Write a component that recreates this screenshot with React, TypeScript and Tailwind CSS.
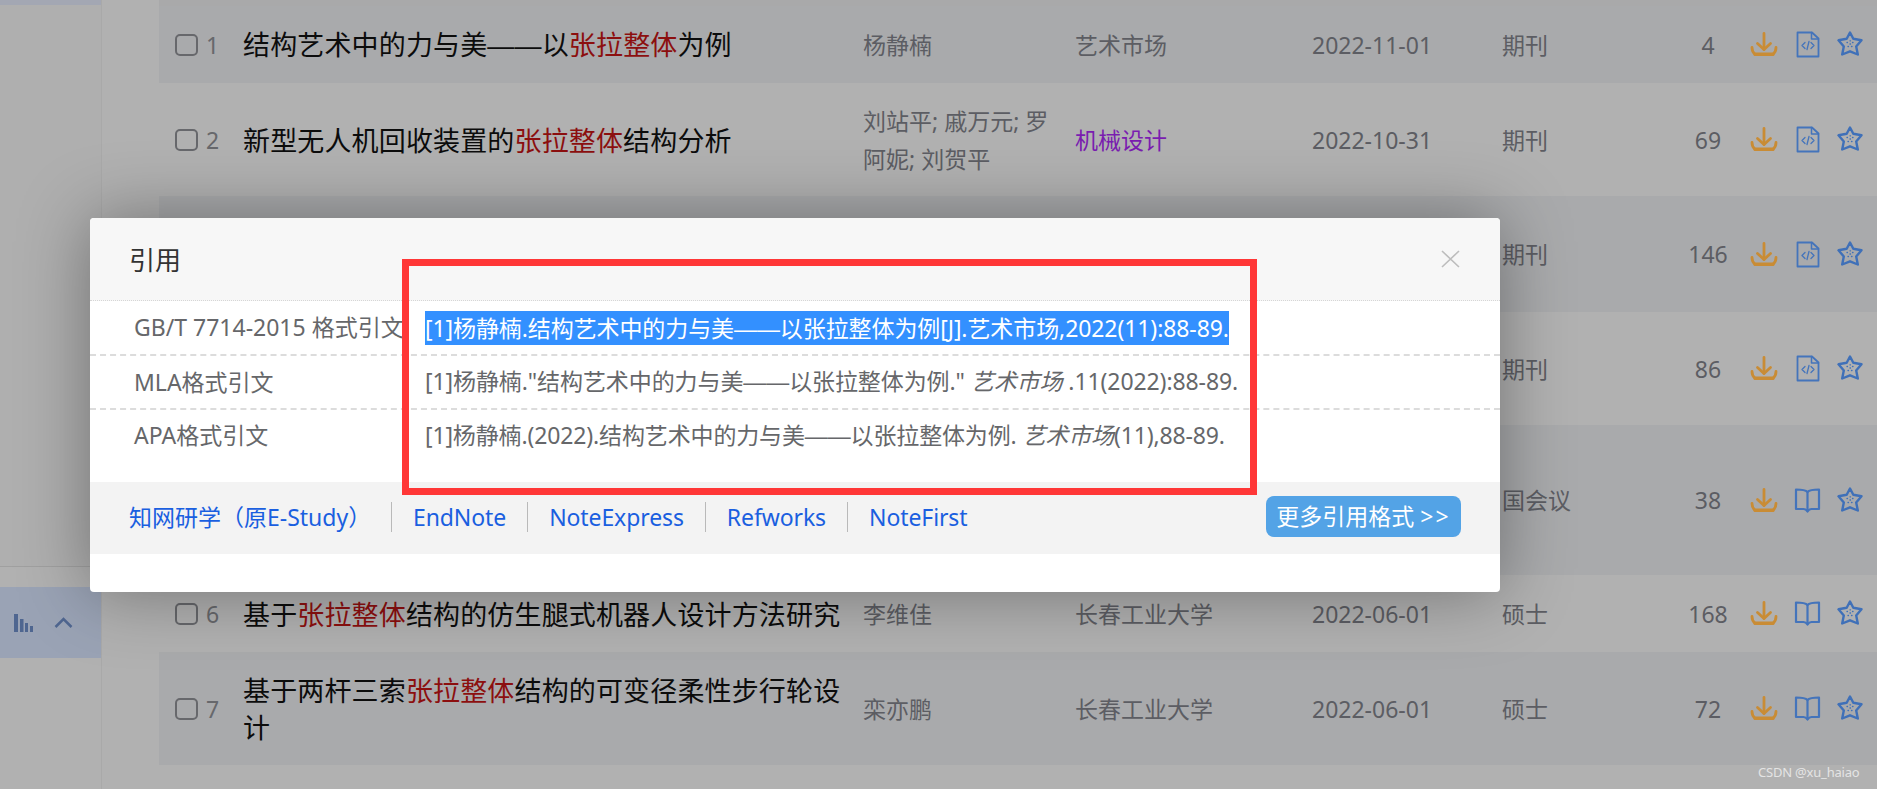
import type { ReactNode } from 'react'

function DownloadIcon() {
  return (
    <svg width="28" height="25" viewBox="0 0 28 25" fill="none" stroke="#c98c35" strokeWidth="2.800" strokeLinecap="round" strokeLinejoin="round">
      <path d="M14 1.500V17.500" />
      <path d="M7.500 11.500 14 17.500l6.500-6" />
      <path d="M2 15.500c0 3 .8 5 3 6.500h18c2.200-1.500 3-3.500 3-6.500" />
      <path d="M5 22.500h18" strokeWidth="3.200" />
    </svg>
  )
}

function DocIcon() {
  return (
    <svg width="24" height="27" viewBox="0 0 24 27" fill="none" stroke="#4474bb" strokeWidth="1.800" strokeLinejoin="round" strokeLinecap="round">
      <path d="M1.500 1.500H16L22.500 7.500V25.500H1.500Z" />
      <path d="M15.500 1.500V8H22.500" strokeWidth="1.500" />
      <path d="M9 11.500 6 14.500l3 3M15 11.500l3 3-3 3M13 10.500l-2 8" strokeWidth="1.300" />
    </svg>
  )
}

function BookIcon() {
  return (
    <svg width="27" height="25" viewBox="0 0 27 25" fill="none" stroke="#4474bb" strokeWidth="2.200" strokeLinejoin="round" strokeLinecap="round" className="-ml-[2px] -mr-[1px]">
      <path d="M13.500 4C11.500 1.800 8 1.500 2 1.500V21H9.500C11 21 12.500 22 13.500 23.500C14.500 22 16 21 17.500 21H25V1.500C19 1.500 15.500 1.800 13.500 4Z" />
      <path d="M13.500 4V23" />
    </svg>
  )
}

function StarIcon() {
  return (
    <svg width="26" height="25" viewBox="0 0 26 25" fill="none" stroke="#3f70b8" strokeWidth="2.400" strokeLinejoin="round" strokeLinecap="round" className="-ml-[1px] -mt-[2px]">
      <path d="M13 1.500 16.300 7.800 24.500 9.300 19.200 15.500 20.800 23.500 13 20.300 5.200 23.500 6.800 15.500 1.500 9.300 9.700 7.800Z" />
      <path d="M10 11.500h.5M15.500 11.500h.5M13 9.800h.5M11 15.500h.5M14.500 15.500h.5M13 13h.5" strokeWidth="1.300" />
    </svg>
  )
}

const Red = ({ children }: { children: ReactNode }) => <span className="text-[#8c0f0f]">{children}</span>
// Liberation's em dash has no side bearing, so the two join into one bar
const Dash = () => <span className="font-['Liberation_Sans',sans-serif]">——</span>

type Row = {
  no?: number
  title?: ReactNode
  authors?: string
  source?: string
  sourceClass?: string
  date?: string
  kind: string
  count: number
  book?: boolean
  height: string
  alt: boolean
}

// rows 3-5 are mostly covered by the dialog, only the right columns show
const rows: Row[] = [
  { no: 1, title: <>结构艺术中的力与美<Dash />以<Red>张拉整体</Red>为例</>, authors: '杨静楠', source: '艺术市场', date: '2022-11-01', kind: '期刊', count: 4, height: 'h-[77px]', alt: true },
  { no: 2, title: <>新型无人机回收装置的<Red>张拉整体</Red>结构分析</>, authors: '刘站平; 戚万元; 罗阿妮; 刘贺平', source: '机械设计', sourceClass: 'text-[#7a1db0]', date: '2022-10-31', kind: '期刊', count: 69, height: 'h-[113px]', alt: false },
  { kind: '期刊', count: 146, height: 'h-[116px]', alt: true },
  { kind: '期刊', count: 86, height: 'h-[113px]', alt: false },
  { kind: '国会议', count: 38, book: true, height: 'h-[150px]', alt: true },
  { no: 6, title: <>基于<Red>张拉整体</Red>结构的仿生腿式机器人设计方法研究</>, authors: '李维佳', source: '长春工业大学', date: '2022-06-01', kind: '硕士', count: 168, book: true, height: 'h-[77px]', alt: false },
  { no: 7, title: <>基于两杆三索<Red>张拉整体</Red>结构的可变径柔性步行轮设计</>, authors: '栾亦鹏', source: '长春工业大学', date: '2022-06-01', kind: '硕士', count: 72, book: true, height: 'h-[113px]', alt: true },
]

function ResultRow({ row }: { row: Row }) {
  return (
    <div className={`${row.height} ${row.alt ? 'bg-[#a9aaac]' : ''} grid grid-cols-[84px_620px_212px_237px_190px_169px_74px_1fr] items-center text-[23px] leading-[38px] text-[#5c5d63]`}>
      <div className="flex items-center pl-[16px]">
        {row.no && <span className="w-[23px] h-[22px] rounded-[5px] border-2 border-[#67686c]" />}
        {row.no && <span className="ml-[8px] text-[#67686c] text-[23px]">{row.no}</span>}
      </div>
      <div className="text-[27px] leading-[37px] tracking-[0.15px] text-[#0c0c0c] pr-[20px] pt-[1px]">{row.title}</div>
      <div className="pr-[24px]">{row.authors}</div>
      <div className={row.sourceClass}>{row.source}</div>
      <div>{row.date}</div>
      <div className="whitespace-nowrap">{row.kind}</div>
      <div className="text-center">{row.count}</div>
      <div className="flex items-center pl-[5px] gap-[18px]">
        <DownloadIcon />
        {row.book ? <BookIcon /> : <DocIcon />}
        <StarIcon />
      </div>
    </div>
  )
}

const links = ['EndNote', 'NoteExpress', 'Refworks', 'NoteFirst']

function CiteModal() {
  return (
    <div className="absolute left-[90px] top-[218px] w-[1410px] h-[374px] bg-white rounded-[4px] shadow-[0_0_70px_rgba(0,0,0,0.36)] overflow-hidden text-[23px] text-[#66676a]">
      <div className="h-[83px] bg-[#f7f7f7] border-b border-dotted border-[#d6d6d6] flex items-center justify-between pl-[39px] pr-[40px]">
        <span className="text-[26px] text-[#333] pt-[2px]">引用</span>
        <svg width="19" height="18" viewBox="0 0 19 18" stroke="#bdbdbd" strokeWidth="1.600" fill="none">
          <path d="M1 1l17 16M18 1 1 17" />
        </svg>
      </div>

      <div className="h-[55px] flex items-center border-b-2 border-dashed border-[#dcdcdc]">
        <div className="w-[335px] pl-[44px] whitespace-nowrap">GB/T 7714-2015 格式引文</div>
        <span className="inline-block h-[34px] leading-[34px] whitespace-nowrap tracking-[-0.09px] bg-[#3390ff] text-white">
          [1]杨静楠.结构艺术中的力与美<Dash />以张拉整体为例[J].艺术市场,2022(11):88-89.
        </span>
      </div>
      <div className="h-[54px] flex items-center border-b-2 border-dashed border-[#dcdcdc]">
        <div className="w-[335px] pl-[44px]">MLA格式引文</div>
        <span className="whitespace-nowrap tracking-[-0.09px]">
          [1]杨静楠."结构艺术中的力与美<Dash />以张拉整体为例." <i>艺术市场</i> .11(2022):88-89.
        </span>
      </div>
      <div className="h-[72px] flex items-start pt-[8px]">
        <div className="w-[335px] pl-[44px]">APA格式引文</div>
        <span className="whitespace-nowrap tracking-[-0.14px]">
          [1]杨静楠.(2022).结构艺术中的力与美<Dash />以张拉整体为例. <i>艺术市场</i>(11),88-89.
        </span>
      </div>

      <div className="h-[72px] bg-[#f3f3f3] flex items-center pl-[39px] pr-[39px] pb-[2px] text-[#1a5fe0]">
        <span className="w-[263px] border-r border-[#b9b9b9] whitespace-nowrap h-[30px] leading-[30px]">知网研学（原E-Study）</span>
        {links.map((name, i) => (
          <span key={name} className={`px-[21px] h-[30px] leading-[30px] tracking-[-0.1px] ${i < links.length - 1 ? 'border-r border-[#b9b9b9]' : ''}`}>
            {name}
          </span>
        ))}
        <button className="ml-auto -mt-[2px] w-[195px] h-[41px] rounded-[8px] bg-[#53a3e6] text-white whitespace-nowrap">
          更多引用格式 <span className="tracking-[2px]">&gt;&gt;</span>
        </button>
      </div>
    </div>
  )
}

export default function App() {
  return (
    <div className="relative h-[789px] w-[1877px] overflow-hidden bg-[#b1b1b1] font-['Noto_Sans','Noto_Sans_CJK_SC',sans-serif]">
      <div className="flex h-full">
        {/* left filter column */}
        <div className="w-[102px] flex flex-col border-r border-[#a9a9a9]">
          <div className="h-[5px] bg-[#a3a7b3]" />
          <div className="h-[562px] bg-[#afafaf] border-b border-[#a0a0a0]" />
          <div className="h-[20px]" />
          <div className="h-[71px] bg-[#9aa3b5] flex items-center pl-[14px] gap-[20px]">
            <svg width="20" height="18" viewBox="0 0 20 18" fill="#4f6690">
              <rect x="0" y="0" width="4" height="18" />
              <rect x="6" y="5" width="3.500" height="13" />
              <rect x="11" y="9" width="3" height="9" />
              <rect x="16" y="12" width="3" height="6" />
            </svg>
            <svg width="19" height="11" viewBox="0 0 19 11" fill="none" stroke="#4f6690" strokeWidth="2.500">
              <path d="M1.500 10 9.500 2l8 8" />
            </svg>
          </div>
        </div>

        {/* results table */}
        <div className="flex-1 pl-[57px]">
          <div className="h-[6px] bg-[#a9a9aa]" />
          {rows.map((row, i) => (
            <ResultRow key={i} row={row} />
          ))}
        </div>
      </div>

      <CiteModal />

      {/* red annotation box drawn over the dialog */}
      <div className="absolute left-[402px] top-[259px] w-[855px] h-[236px] border-[7px] border-[#ff3737]" />

      <div className="absolute left-[1758px] top-[763px] text-[13px] tracking-[-0.2px] text-[#e4e4e4] whitespace-nowrap">CSDN @xu_haiao</div>
    </div>
  )
}
